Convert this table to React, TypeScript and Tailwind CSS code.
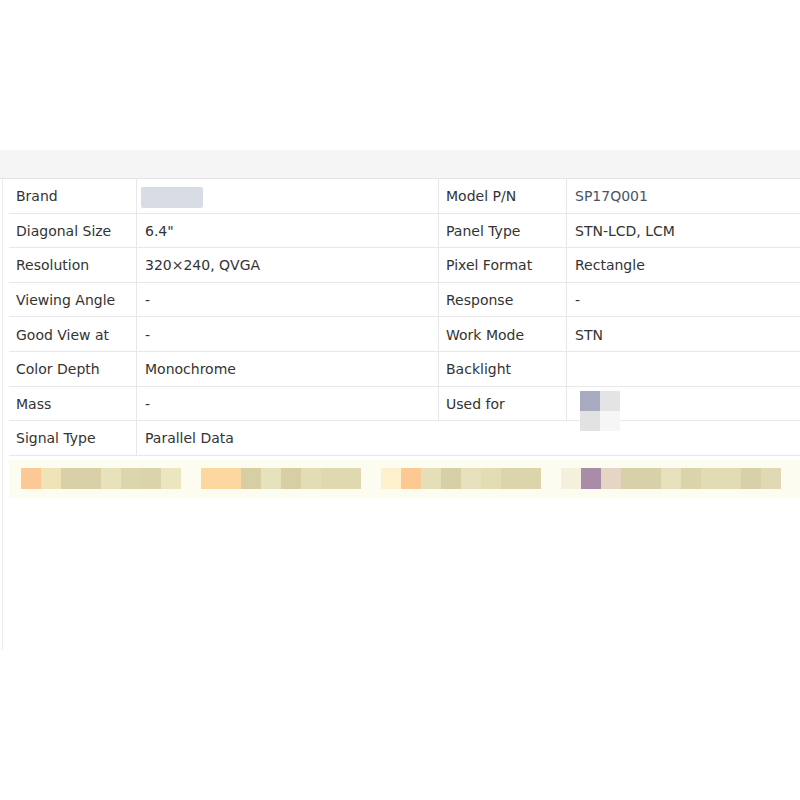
const rows = [
  { l: "Brand", v: "", rl: "Model P/N", rv: "SP17Q001" },
  { l: "Diagonal Size", v: "6.4\"", rl: "Panel Type", rv: "STN-LCD, LCM" },
  { l: "Resolution", v: "320×240, QVGA", rl: "Pixel Format", rv: "Rectangle" },
  { l: "Viewing Angle", v: "-", rl: "Response", rv: "-" },
  { l: "Good View at", v: "-", rl: "Work Mode", rv: "STN" },
  { l: "Color Depth", v: "Monochrome", rl: "Backlight", rv: "" },
  { l: "Mass", v: "-", rl: "Used for", rv: "" },
];

const groups = [
  ["bg-[#fcc896]", "bg-[#f0e3b8]", "bg-[#d9d0a8]", "bg-[#d9d0a8]", "bg-[#e8e2bc]", "bg-[#dcd6ac]", "bg-[#dbd3aa]", "bg-[#ebe6c0]"],
  ["bg-[#fdd7a0]", "bg-[#fdd7a0]", "bg-[#d8cea4]", "bg-[#e6e2bc]", "bg-[#d8cea4]", "bg-[#e3ddb6]", "bg-[#e0d9b0]", "bg-[#e0d9b0]"],
  ["bg-[#fdf0cd]", "bg-[#fdc992]", "bg-[#e4dfb8]", "bg-[#d7cfa6]", "bg-[#e6e1bc]", "bg-[#e3ddb4]", "bg-[#dcd4aa]", "bg-[#dcd4aa]"],
  ["bg-[#f5f0dc]", "bg-[#a88ca8]", "bg-[#e5d5c5]", "bg-[#d8d0a8]", "bg-[#d8d0a8]", "bg-[#e6e1bc]", "bg-[#dbd4ab]", "bg-[#e2dcb4]", "bg-[#e2dcb4]", "bg-[#d8d0a8]", "bg-[#e0d9b3]"],
];

const cell = "flex items-center pt-[2px] border-b border-[#e8e8e8]";

const App = () => {
  return (
    <div className="w-[800px] h-[800px] bg-white overflow-hidden font-['DejaVu_Sans',sans-serif] text-[14px] text-[#333]">
      <div className="h-[150px]" />
      {/* header band */}
      <div className="h-[29px] bg-[#f4f5f4] border-b border-[#e4e4e4]" />

      <div className="ml-[2px] h-[471px] border-l border-[#ececec] pl-[6px]">
        {rows.map((r) => (
          <div key={r.l} className="grid grid-cols-[128px_302px_128px_1fr] h-[34.6px]">
            <div className={`${cell} pl-[7px] border-r`}>{r.l}</div>
            <div className={`${cell} pl-[8px] border-r relative`}>
              {r.l === "Brand" ? <div className="absolute left-[4px] top-[8px] w-[62px] h-[21px] bg-[#d8dce5] rounded-[2px]" /> : r.v}
            </div>
            <div className={`${cell} pl-[7px] border-r`}>{r.rl}</div>
            <div className={`${cell} pl-[8px] relative ${r.rl === "Model P/N" ? "text-[#4a5566]" : ""}`}>
              {r.rl === "Used for" ? (
                <div className="absolute left-[13px] top-[4px] grid grid-cols-[20px_20px] grid-rows-[20px_20px]">
                  <div className="bg-[#a9abc0]" />
                  <div className="bg-[#e4e4e6]" />
                  <div className="bg-[#e2e2e2]" />
                  <div className="bg-[#f6f6f6]" />
                </div>
              ) : (
                r.rv
              )}
            </div>
          </div>
        ))}
        <div className="grid grid-cols-[128px_302px_1fr] h-[34.6px] border-b border-[#e8e8e8]">
          <div className="flex items-center pt-[2px] pl-[7px] border-r border-[#e8e8e8]">Signal Type</div>
          <div className="flex items-center pt-[2px] pl-[8px]">Parallel Data</div>
          <div />
        </div>

        {/* blurred badges */}
        <div className="mt-[4px] h-[38px] bg-[#fdfcf0] flex items-center pl-[12px] gap-[20px]">
          {groups.map((g, i) => (
            <div key={i} className="flex">
              {g.map((c, j) => (
                <div key={j} className={`w-[20px] h-[21px] ${c}`} />
              ))}
            </div>
          ))}
        </div>
      </div>
    </div>
  );
};

export default App;
